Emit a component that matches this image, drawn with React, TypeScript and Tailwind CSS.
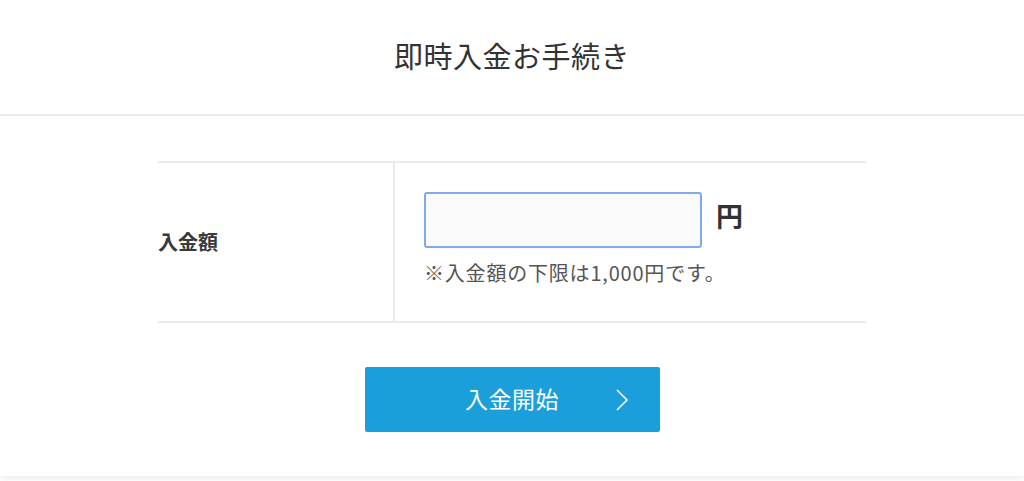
export default function App() {
  return (
    <div className="min-h-screen bg-white font-['Noto_Sans_CJK_JP','Noto_Sans',sans-serif] text-[#333]">
      {/* Header */}
      <header className="h-[116px] flex items-center justify-center border-b-2 border-[#ececec]">
        <h1 className="text-[29px] leading-none tracking-[0.5px] pb-[4px] text-[#333]">
          即時入金お手続き
        </h1>
      </header>

      {/* Form card */}
      <main className="bg-white pt-[45px] pb-[44px] shadow-[0_3px_5px_rgba(0,0,0,0.07)]">
        <div className="w-[708px] mx-auto flex border-y-2 border-[#ebebeb]">
          <div className="w-[235px] flex items-center">
            <span className="text-[20px] font-bold text-[#3a3a3a]">入金額</span>
          </div>
          <div className="flex-1 border-l-2 border-[#ebebeb] pl-[29px] pt-[29px] pb-[33px]">
            <div className="flex items-center gap-[14px]">
              <input
                type="text"
                className="w-[278px] h-[56px] bg-[#fafafa] border-2 border-[#80aaee] rounded-[3px] px-3 text-[20px] outline-none"
              />
              <span className="text-[27px] font-bold leading-none text-[#333] pb-[10px]">円</span>
            </div>
            <p className="mt-[10px] text-[20px] leading-[30px] tracking-[0.8px] text-[#555]">
              ※入金額の下限は1,000円です。
            </p>
          </div>
        </div>

        <div className="flex justify-center mt-[44px]">
          <button className="relative w-[295px] h-[65px] bg-[#1a9fdb] rounded-[2px] text-white text-[23px] tracking-[0.5px] flex items-center justify-center">
            <span className="pb-[3px]">入金開始</span>
            <svg
              className="absolute right-[31px] top-1/2 -translate-y-1/2"
              width="14"
              height="24"
              viewBox="0 0 14 24"
              fill="none"
              stroke="white"
              strokeWidth="1.6"
            >
              <polyline points="2,2 12,12 2,22" />
            </svg>
          </button>
        </div>
      </main>
    </div>
  );
}
